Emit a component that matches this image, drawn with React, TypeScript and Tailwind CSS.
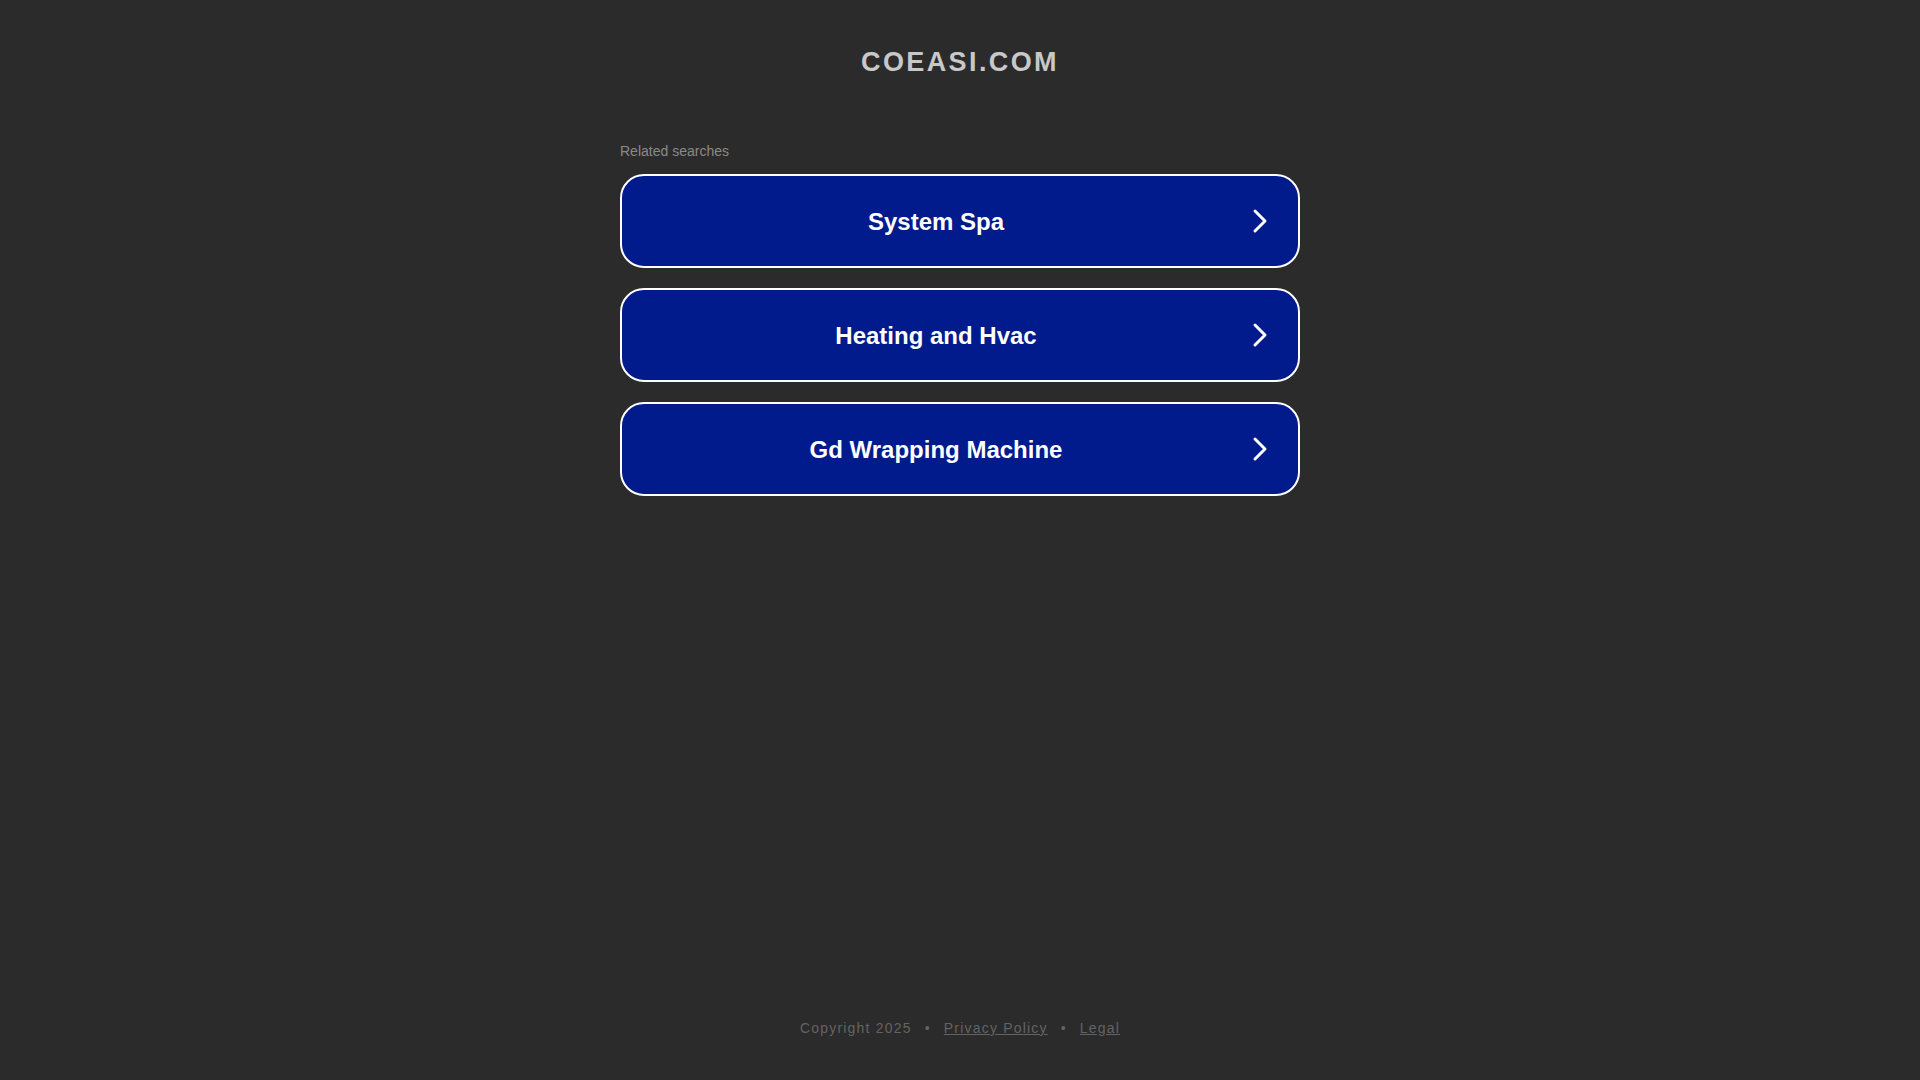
import React from "react";

const items = ["System Spa", "Heating and Hvac", "Gd Wrapping Machine"];

function Chevron() {
  return (
    <svg width="20" height="28" viewBox="0 0 20 28" fill="none" aria-hidden="true">
      <path d="M5 4 L15 14 L5 24" stroke="#ffffff" strokeWidth="3" strokeLinecap="round" strokeLinejoin="round" />
    </svg>
  );
}

export default function App() {
  return (
    <div
      className="min-h-screen w-full bg-[#2b2b2b] flex flex-col items-center"
      style={{ fontFamily: '"Liberation Sans", Arial, Helvetica, sans-serif' }}
    >
      <h1 className="mt-[47px] text-[27px] leading-[30px] font-bold tracking-[2.4px] text-[#c8c8c8] text-center">
        COEASI.COM
      </h1>

      <div className="mt-[66px] w-[680px] flex flex-col">
        <div className="text-[14px] leading-[16px] text-[#8a8a8a]">Related searches</div>
        <div className="mt-[15px] flex flex-col gap-[20px]">
          {items.map((t) => (
            <a
              key={t}
              href="#"
              className="h-[94px] w-full rounded-[24px] border-2 border-white bg-[#011a8c] flex items-center"
            >
              <span className="flex-1 pt-[2px] text-center text-[24px] leading-[28px] font-bold text-white">{t}</span>
              <span className="w-[20px] mr-[28px] flex items-center justify-center">
                <Chevron />
              </span>
            </a>
          ))}
        </div>
      </div>

      <footer className="mt-auto mb-[44px] text-[14px] leading-[16px] tracking-[1.2px] text-[#636363] flex items-center">
        <span>Copyright 2025</span>
        <span className="mx-[13px]">•</span>
        <a href="#" className="underline text-[#636363]">Privacy Policy</a>
        <span className="mx-[13px]">•</span>
        <a href="#" className="underline text-[#636363]">Legal</a>
      </footer>
    </div>
  );
}
